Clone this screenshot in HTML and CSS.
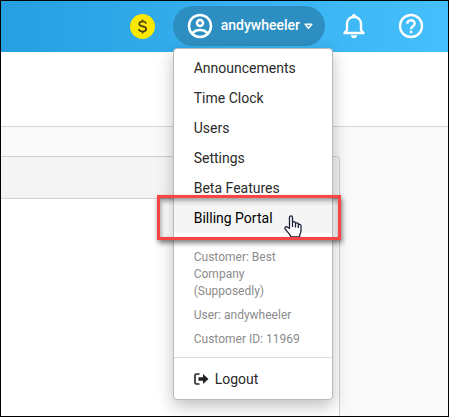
FILE: index.html
```html
<!DOCTYPE html>
<html lang="en">

<head>
    <meta charset="utf-8">
    <meta name="viewport" content="width=device-width, initial-scale=1.0">
    <title>Account menu</title>
    <link rel="stylesheet" href="styles.css">
</head>

<body>

    <header class="topbar">
        <button class="coin" aria-label="Billing">
            <svg width="11" height="15" viewBox="0 0 11 15" aria-hidden="true">
                <path d="M9 4.6C8.700 3.200 7.300 2.500 5.500 2.500C3.600 2.500 2.200 3.400 2.200 4.900C2.200 8.200 9.200 6.400 9.200 9.900C9.200 11.500 7.600 12.500 5.500 12.500C3.500 12.500 2.100 11.700 1.800 10.200M5.500 .5V2.500M5.500 12.500V14.500" fill="none" stroke="#4a4210" stroke-width="1.700" />
            </svg>
        </button>

        <div class="account">
            <button class="account-button" aria-expanded="true">
                <svg width="26" height="26" viewBox="0 0 26 26" fill="none" stroke="#fff" stroke-width="2.500" aria-hidden="true">
                    <circle cx="13" cy="13" r="11" />
                    <circle cx="13" cy="10" r="3" />
                    <path d="M5.500 20.500C7 18 10 17 13 17C16 17 19 18 20.500 20.500" />
                </svg>
                <span>andywheeler</span>
                <svg width="9" height="7" viewBox="0 0 9 7" aria-hidden="true">
                    <path d="M1.200 1.200H7.800L4.500 5.200Z" fill="none" stroke="#fff" stroke-width="1.500" stroke-linejoin="round" />
                </svg>
            </button>

            <div class="menu">
                <nav class="links">
                    <a href="#">Announcements</a>
                    <a href="#">Time Clock</a>
                    <a href="#">Users</a>
                    <a href="#">Settings</a>
                    <a href="#">Beta Features</a>
                    <a href="#" class="active">Billing Portal
                        <svg class="pointer" width="18" height="23" viewBox="0 0 18 23" aria-hidden="true">
                            <path d="M5.500 13.500V2.500C5.500 .3 8.500 .3 8.500 2.500V8C8.700 6 11.500 6.300 11.500 8.300V9C11.800 7.300 14.300 7.500 14.300 9.300V10C14.700 8.800 17 9 17 11V15.500C17 18 15.500 19 15.500 22H7C6.500 19.500 3.500 17.500 1.300 14.200C.2 12.400 2 11 3.600 12.300ZM8.500 8V12M11.500 9V12.500M14.300 10V13" fill="#fff" stroke="#1c2038" stroke-width="1.300" stroke-linejoin="round" />
                        </svg>
                    </a>
                </nav>
                <div class="details">
                    <p>Customer: Best Company (Supposedly)</p>
                    <p>User: andywheeler</p>
                    <p>Customer ID: 11969</p>
                </div>
                <a href="#" class="logout">
                    <svg width="15" height="12" viewBox="0 0 15 12" aria-hidden="true">
                        <path d="M5.500 1H2.500Q1 1 1 2.500V9.500Q1 11 2.500 11H5.500" fill="none" stroke="#212121" stroke-width="1.600" />
                        <path d="M4.500 4.300H9V1L14.500 6L9 11V7.700H4.500Z" fill="#212121" />
                    </svg>
                    Logout
                </a>
            </div>
        </div>

        <button class="icon" aria-label="Notifications">
            <svg width="24" height="26" viewBox="0 0 24 26" aria-hidden="true">
                <path d="M2.500 20H21.500L19 17V11C19 7 16.500 4 12 4C7.500 4 5 7 5 11V17Z" fill="none" stroke="#fff" stroke-width="2.400" stroke-linejoin="round" />
                <path d="M10 4V2.800C10 .4 14 .4 14 2.800V4ZM8.800 22.300H15.200C15 26.200 9 26.200 8.800 22.300Z" fill="#fff" />
            </svg>
        </button>
        <button class="icon" aria-label="Help">
            <svg width="26" height="26" viewBox="0 0 26 26" fill="none" stroke="#fff" stroke-width="2.400" aria-hidden="true">
                <circle cx="13" cy="13" r="11" />
                <path d="M9.300 10.800C9.300 6.200 16.700 6.200 16.700 10.600C16.700 13.200 13 13.200 13 16.200M13 17.800V20.200" />
            </svg>
        </button>
    </header>

    <section class="intro"></section>

    <main class="content">
        <section class="card">
            <div class="card-head"></div>
        </section>
    </main>

</body>

</html>
```
FILE: styles.css
```css
* {
    box-sizing: border-box;
}

body {
    margin: 0;
    min-height: 100vh;
    display: flex;
    flex-direction: column;
    border: 1px solid #000;
    background: #f9f9f9;
    color: #2a2a2a;
    font-family: Roboto, "Liberation Sans", sans-serif;
    font-size: 14px;
}

button {
    padding: 0;
    border: 0;
    background: none;
    font: inherit;
    color: inherit;
    cursor: pointer;
}

a {
    color: inherit;
    text-decoration: none;
}

svg {
    display: block;
    flex: none;
}

.topbar {
    display: flex;
    align-items: center;
    justify-content: flex-end;
    height: 51px;
    padding: 0 24px 1px 0;
    background: linear-gradient(to right, #269fe1, #45c0fc);
}

.coin {
    display: grid;
    place-items: center;
    width: 25px;
    height: 25px;
    margin-right: 18px;
    border-radius: 50%;
    background: #fde800;
}

.account {
    position: relative;
    margin-right: 17px;
}

.account-button {
    display: flex;
    align-items: center;
    height: 40px;
    padding: 0 12px 0 14px;
    border-radius: 20px;
    background: #2d8fc1;
    color: #fff;
    font-weight: 500;
}

.account-button span {
    margin: 0 4px 0 8px;
    padding-bottom: 2px;
}

.icon + .icon {
    margin-left: 32px;
}

.menu {
    position: absolute;
    top: 42px;
    left: 0;
    z-index: 1;
    width: 160px;
    padding-top: 4px;
    border: 1px solid #bbb;
    border-radius: 4px;
    background: #fff;
    box-shadow: 0 6px 16px rgba(0, 0, 0, .25);
}

.links a {
    display: block;
    padding: 0 20px;
    line-height: 30px;
}

.links .active {
    position: relative;
    background: #f5f5f5;
    color: #000;
}

/* frame around the current entry */
.links .active::after {
    content: "";
    position: absolute;
    inset: -8px -9px -7px -17px;
    border: 3px solid #fb4444;
    box-shadow: 1px 3px 5px rgba(0, 0, 0, .5), inset 1px 3px 5px rgba(0, 0, 0, .4);
}

.pointer {
    position: absolute;
    top: 12px;
    right: 30px;
}

.details {
    padding: 16px 20px 9px;
    border-bottom: 1px solid #ddd;
    color: #8c8c8c;
    font-size: 12px;
    line-height: 17px;
}

.details p {
    margin: 0 0 7px;
}

.details p:last-child {
    margin-bottom: 0;
}

.logout {
    display: flex;
    align-items: center;
    gap: 6px;
    height: 41px;
    padding: 0 20px;
}

.intro {
    height: 75px;
    border-bottom: 1px solid #d4d4d4;
    background: #fff;
}

.content {
    flex: 1;
    display: flex;
    padding: 29px 108px 0 0;
}

.card {
    flex: 1;
    border: 1px solid #d0d0d0;
    border-width: 1px 1px 0 0;
    border-radius: 0 4px 0 0;
    background: #fff;
}

.card-head {
    height: 42px;
    border-bottom: 1px solid #d0d0d0;
    border-radius: 0 3px 0 0;
    background: #f4f4f4;
}
```
